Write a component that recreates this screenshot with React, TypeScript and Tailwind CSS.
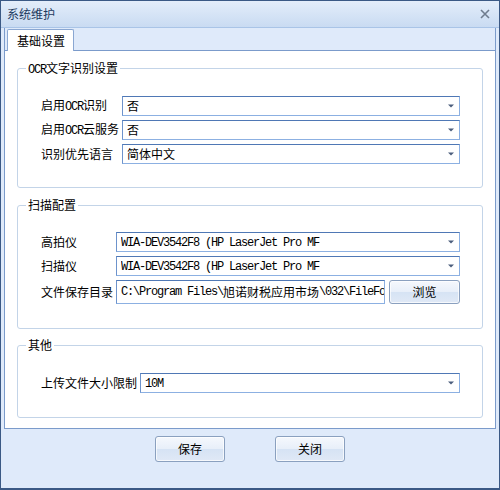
import React from "react";

const M = ({ children }: { children: React.ReactNode }) => (
  <span className="font-['Liberation_Mono',monospace] text-[12px] tracking-[-1.2px]">{children}</span>
);

function Arrow() {
  return (
    <svg width="6" height="4" viewBox="0 0 6 4" className="shrink-0 mr-[5px]">
      <path d="M0 0.5H6L3 3.5Z" fill="#4b5d7c" />
    </svg>
  );
}

function Combo({ children }: { children: React.ReactNode }) {
  return (
    <div className="flex-1 h-full flex items-center border border-[#8cb0e2] border-t-[#4f78b5] border-l-[#6d93cc] bg-white pl-[4px] min-w-0">
      <div className="flex-1 min-w-0 overflow-hidden whitespace-nowrap leading-[18px]">{children}</div>
      <Arrow />
    </div>
  );
}

function Btn({ children, className = "" }: { children: React.ReactNode; className?: string }) {
  return (
    <div
      className={
        "flex items-center justify-center rounded-[3px] border border-[#8aa0bf] bg-[linear-gradient(to_bottom,#f5f8fd,#e8eff9_48%,#d6e3f4_52%,#e0e9f6)] shadow-[inset_0_0_0_1px_rgba(255,255,255,0.7)] " +
        className
      }
    >
      {children}
    </div>
  );
}

function Group({
  title,
  h,
  mt,
  pt,
  children,
}: {
  title: React.ReactNode;
  h: string;
  mt: string;
  pt: string;
  children: React.ReactNode;
}) {
  return (
    <fieldset className={`mx-[12px] min-w-0 ${h} ${mt} border border-[#c3d4e8] rounded-[3px] p-0 m-0`}>
      <legend className="ml-[8px] px-[2px] leading-[16px] h-[16px] text-[12px] text-black">{title}</legend>
      <div className={`${pt} pl-[23px] pr-[22px] flex flex-col gap-[4px] min-w-0`}>{children}</div>
    </fieldset>
  );
}

function Row({ label, lw, children, h = "h-[20px]" }: { label: React.ReactNode; lw: string; children: React.ReactNode; h?: string }) {
  return (
    <div className={`flex items-center min-w-0 ${h}`}>
      <div className={`${lw} shrink-0 whitespace-nowrap`}>{label}</div>
      {children}
    </div>
  );
}

export default function App() {
  return (
    <div className="w-[500px] h-[490px] flex flex-col border border-[#3b5985] border-b-2 bg-[#dfeafa] font-['Noto_Sans_CJK_SC','Noto_Sans',sans-serif] text-[12px] text-black leading-none select-none overflow-hidden">
      {/* title bar */}
      <div className="h-[27px] shrink-0 flex items-center justify-between pl-[6px] pr-[9px] bg-[linear-gradient(to_bottom,#e4edfa,#d6e4f6_50%,#c9dbf2)] border-b border-[#a9c4e7]">
        <span className="text-[#1e3a5f] text-[12px]">系统维护</span>
        <svg width="10" height="10" viewBox="0 0 10 10">
          <path d="M1 1L9 9M9 1L1 9" stroke="#6f7c8e" strokeWidth="1.6" />
        </svg>
      </div>

      <div className="flex-1 flex flex-col px-[3px]">
        {/* tab control frame */}
        <div className="h-[401px] flex flex-col border-x border-b border-[#7b9bcb]">
          <div className="h-[23px] shrink-0 flex items-end border-b border-[#7b9bcb] pl-[2px]">
            <div className="h-[22px] mb-[-1px] w-[67px] bg-white border-x border-t border-[#8aa7d2] rounded-t-[2px] flex items-center pl-[9px] text-[12px]">
              基础设置
            </div>
          </div>
          <div className="flex-1 bg-white flex flex-col min-w-0">
            <Group
              title={
                <>
                  <M>OCR</M>文字识别设置
                </>
              }
              h="h-[128px]"
              mt="mt-[9px]"
              pt="pt-[20px]"
            >
              <Row lw="w-[81px]" label={<>启用<M>OCR</M>识别</>}>
                <Combo>否</Combo>
              </Row>
              <Row lw="w-[81px]" label={<>启用<M>OCR</M>云服务</>}>
                <Combo>否</Combo>
              </Row>
              <Row lw="w-[81px]" label="识别优先语言">
                <Combo>简体中文</Combo>
              </Row>
            </Group>

            <Group title="扫描配置" h="h-[132px]" mt="mt-[9px]" pt="pt-[19px]">
              <Row lw="w-[75px]" label="高拍仪">
                <Combo>
                  <M>WIA-DEV3542F8 (HP LaserJet Pro MF</M>
                </Combo>
              </Row>
              <Row lw="w-[75px]" label="扫描仪">
                <Combo>
                  <M>WIA-DEV3542F8 (HP LaserJet Pro MF</M>
                </Combo>
              </Row>
              <Row lw="w-[75px]" label="文件保存目录" h="h-[24px]">
                <div className="flex-1 h-full flex items-center border border-[#8cb0e2] border-t-[#4f78b5] border-l-[#6d93cc] bg-white pl-[4px] min-w-0 overflow-hidden whitespace-nowrap">
                  <M>{"C:\\Program Files\\"}</M>
                  <span>旭诺财税应用市场</span>
                  <M>{"\\032\\FileFolder"}</M>
                </div>
                <Btn className="w-[71px] h-full ml-[4px] shrink-0">浏览</Btn>
              </Row>
            </Group>

            <Group title="其他" h="h-[81px]" mt="mt-[8px]" pt="pt-[20px]">
              <Row lw="w-[99px]" label="上传文件大小限制">
                <Combo>
                  <M>10M</M>
                </Combo>
              </Row>
            </Group>
          </div>
        </div>

        {/* buttons */}
        <div className="flex justify-center gap-[50px] pt-[7px]">
          <Btn className="w-[70px] h-[26px]">保存</Btn>
          <Btn className="w-[70px] h-[26px]">关闭</Btn>
        </div>
      </div>
    </div>
  );
}
